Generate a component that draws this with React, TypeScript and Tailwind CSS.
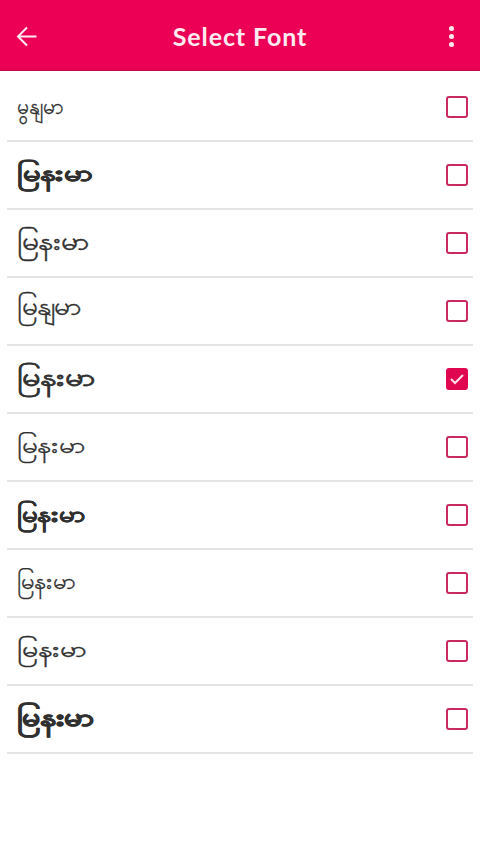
import React, { useState } from 'react';
import clsx from 'clsx';

interface FontOption {
  id: number;
  sample: string;
  className: string;
}

const fontOptions: FontOption[] = [
  { id: 1, sample: 'မွနျမာ', className: 'text-[21px] pb-0.5 [-webkit-text-stroke:0.3px]' },
  { id: 2, sample: 'မြနးမာ', className: 'text-[22px] font-bold pb-1.5 scale-x-[1.41] [-webkit-text-stroke:0.5px]' },
  { id: 3, sample: 'မြနးမာ', className: 'text-[24px] pb-1 scale-x-[1.25] [-webkit-text-stroke:0.4px]' },
  { id: 4, sample: 'မြနျမာ', className: 'text-[24px] pb-2.5 scale-x-[1.17] [-webkit-text-stroke:0.3px]' },
  { id: 5, sample: 'မြနးမာ', className: 'text-[24px] pb-1 scale-x-[1.36] [-webkit-text-stroke:0.8px]' },
  { id: 6, sample: 'မြနးမာ', className: 'text-[22px] pb-1.5 scale-x-[1.27] [-webkit-text-stroke:0.3px]' },
  { id: 7, sample: 'မြနးမာ', className: 'text-[22px] font-bold pb-1 scale-x-[1.26] [-webkit-text-stroke:0.3px]' },
  { id: 8, sample: 'မြနးမာ', className: 'text-[22px] pb-1.5 scale-x-[1.08] [-webkit-text-stroke:0.3px]' },
  { id: 9, sample: 'မြနးမာ', className: 'text-[22px] pb-1.5 scale-x-[1.30] [-webkit-text-stroke:0.4px]' },
  { id: 10, sample: 'မြနးမာ', className: 'text-[24px] font-bold pb-1 scale-x-[1.33] [-webkit-text-stroke:0.7px]' },
];

const Header: React.FC = () => (
  <header className="flex h-[71px] items-center justify-between border-b border-[#c30b50] bg-[#eb0055] pt-1 pr-[18px] pl-4 text-[#ffeaf2]">
    <button type="button" aria-label="Back">
      <svg width="22" height="22" viewBox="0 0 22 22" fill="none" stroke="currentColor" strokeWidth="2">
        <path d="M20.5 10.5H2M11 1.5L2 10.5L11 19.5" />
      </svg>
    </button>
    <h1 className="pb-0.5 pl-0.5 font-['Lato',sans-serif] text-[25px] leading-8 font-bold tracking-[0.9px]">
      Select Font
    </h1>
    <button type="button" aria-label="More" className="flex w-[22px] flex-col items-center gap-[3px] pb-0.5">
      <span className="size-[5px] rounded-full bg-current" />
      <span className="size-[5px] rounded-full bg-current" />
      <span className="size-[5px] rounded-full bg-current" />
    </button>
  </header>
);

const CheckBox: React.FC<{ checked: boolean }> = ({ checked }) => (
  <span
    className={clsx(
      'flex size-[22px] items-center justify-center rounded-[3px] border-2',
      checked ? 'border-[#e0064f] bg-[#e0064f]' : 'border-[#ca2a5e] bg-white'
    )}
  >
    {checked && (
      <svg width="14" height="12" viewBox="0 0 14 12" fill="none" stroke="#ffe3ed" strokeWidth="2">
        <path d="M1 6L5 10L13 2" />
      </svg>
    )}
  </span>
);

export default function App() {
  const [selected, setSelected] = useState(5);

  return (
    <div className="min-h-[854px] bg-white">
      <Header />
      <ul className="px-[7px]">
        {fontOptions.map((option) => (
          <li
            key={option.id}
            className="h-[68px] border-b-2 border-[#e4e4e4] first:h-[71px] first:pt-[3px]"
          >
            <button
              type="button"
              role="checkbox"
              aria-checked={selected === option.id}
              aria-label={`Font ${option.id}`}
              onClick={() => setSelected(option.id)}
              className="flex h-full w-full items-center justify-between pr-[5px] pl-[10px]"
            >
              <span className={clsx("origin-left font-['Noto_Sans',sans-serif] leading-9 text-[#303030]", option.className)}>
                {option.sample}
              </span>
              <CheckBox checked={selected === option.id} />
            </button>
          </li>
        ))}
      </ul>
    </div>
  );
}
